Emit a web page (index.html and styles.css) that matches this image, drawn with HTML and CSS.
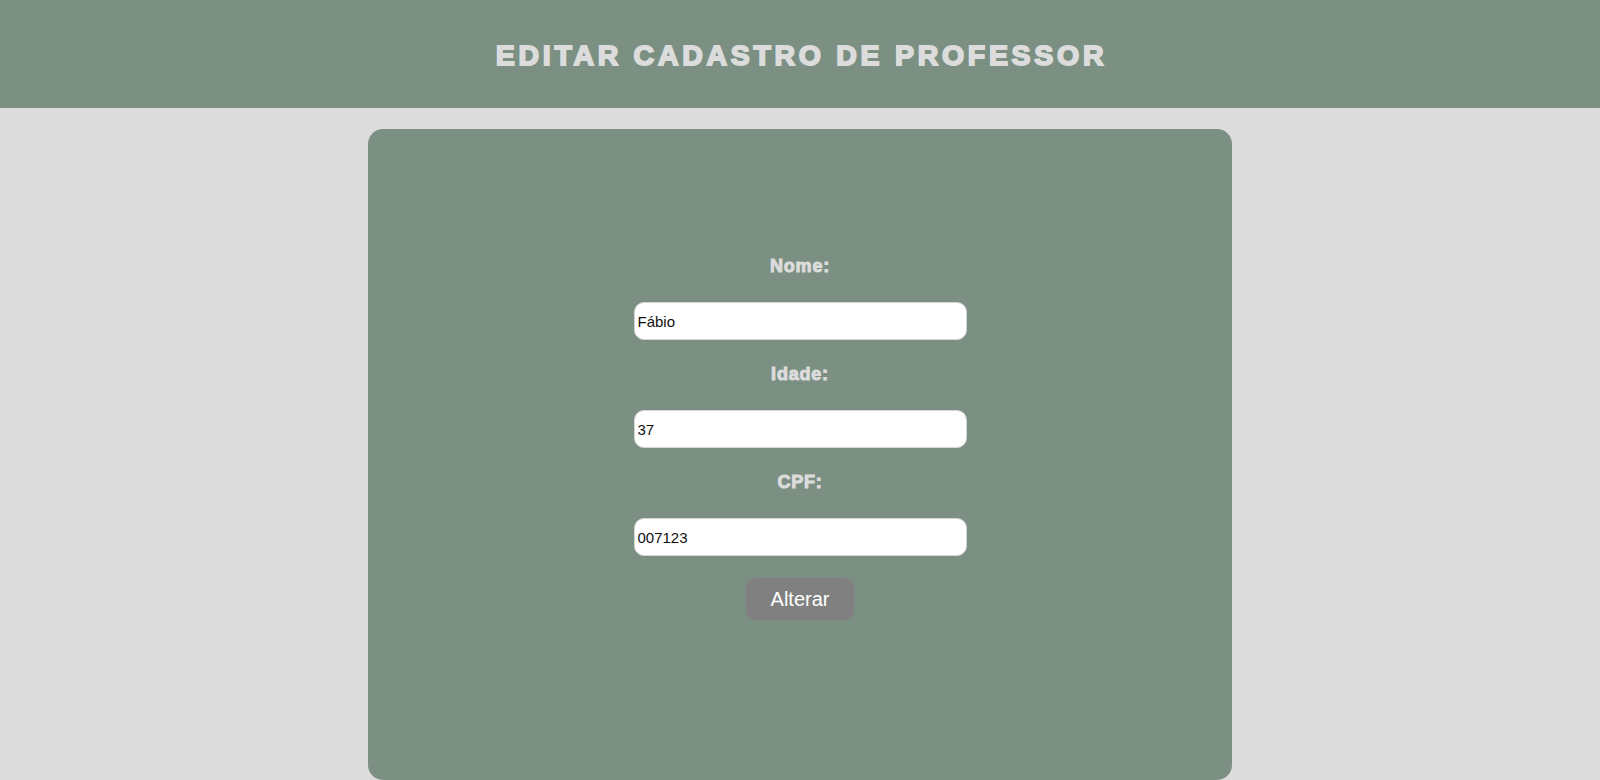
FILE: index.html
```html
<!DOCTYPE html>
<html lang="pt-BR">
<head>
<meta charset="utf-8">
<title>Editar Cadastro de Professor</title>
<link rel="stylesheet" href="styles.css">
</head>
<body>
<header class="topbar">
  <h1 class="title">EDITAR CADASTRO DE PROFESSOR</h1>
</header>
<main class="page">
  <form class="card">
    <div class="field">
      <label class="label" for="nome">Nome:</label>
      <input class="input" id="nome" type="text" value="Fábio">
    </div>
    <div class="field">
      <label class="label" for="idade">Idade:</label>
      <input class="input" id="idade" type="text" value="37">
    </div>
    <div class="field">
      <label class="label" for="cpf">CPF:</label>
      <input class="input" id="cpf" type="text" value="007123">
    </div>
    <button class="btn" type="button">Alterar</button>
  </form>
</main>
</body>
</html>
```

FILE: styles.css
```css
* { box-sizing: border-box; }

html, body {
  margin: 0;
  padding: 0;
  background: #dcdcdc;
  font-family: "Liberation Sans", Arial, sans-serif;
  overflow: hidden;
}

.topbar {
  height: 108px;
  background: #7b9083;
  display: flex;
  align-items: center;
  justify-content: center;
}

.title {
  margin: 0 0 0 3px;
  font-size: 28.5px;
  font-weight: 700;
  letter-spacing: 3.7px;
  color: #dcdcdc;
  -webkit-text-stroke: 1.8px #dcdcdc;
  padding-top: 2px;
}

.page {
  display: flex;
  justify-content: center;
  padding-top: 21px;
}

.card {
  width: 864px;
  height: 651px;
  background: #7b9083;
  border-radius: 15px;
  display: flex;
  flex-direction: column;
  align-items: center;
  padding-top: 127px;
}

.field {
  display: flex;
  flex-direction: column;
  align-items: center;
  margin-bottom: 24px;
}

.label {
  font-size: 18px;
  font-weight: 700;
  line-height: 21px;
  color: #dcdcdc;
  letter-spacing: 0.8px;
  -webkit-text-stroke: 1px #dcdcdc;
  margin-bottom: 25px;
}

.input {
  width: 333px;
  height: 38px;
  border: 1px solid #d6d6d6;
  border-radius: 10px;
  background: #ffffff;
  padding: 0 3px;
  font-family: "Liberation Sans", Arial, sans-serif;
  font-size: 15px;
  color: #111;
  outline: none;
}

.btn {
  margin-top: -2px;
  width: 108px;
  height: 42px;
  border: none;
  border-radius: 10px;
  background: #808080;
  color: #ffffff;
  font-family: "Liberation Sans", Arial, sans-serif;
  font-size: 20px;
  cursor: pointer;
}
```
